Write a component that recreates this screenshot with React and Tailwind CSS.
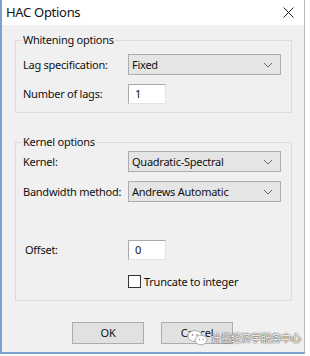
import React from 'react';

const Chevron = () => (
  <svg width="10" height="6" viewBox="0 0 10 6" className="shrink-0">
    <path d="M1 1 L5 5 L9 1" fill="none" stroke="#6b6b6b" strokeWidth="1" />
  </svg>
);

function Select({ value }) {
  return (
    <div className="flex h-[21px] w-[153px] items-center justify-between border border-[#adadad] bg-[#e5e5e5] pl-[3px] pr-[7px]">
      <span>{value}</span>
      <Chevron />
    </div>
  );
}

function NumberBox({ value }) {
  return (
    <div className="flex h-[20px] w-[38px] items-center border border-[#a9a9a9] border-b-[#e3e3e3] border-r-[#e3e3e3] bg-white pl-[6px]">
      {value}
    </div>
  );
}

function Row({ label, children, className = '' }) {
  return (
    <div className={`flex items-center ${className}`}>
      <span className="w-[105px] shrink-0 whitespace-nowrap">{label}</span>
      {children}
    </div>
  );
}

function Group({ title, className = '', children }) {
  return (
    <fieldset className={`mx-[13px] border border-[#dcdcdc] pl-[7px] pr-[10px] ${className}`}>
      <legend className="ml-[-1px] px-[1px] leading-[16px]">{title}</legend>
      {children}
    </fieldset>
  );
}

function Button({ children }) {
  return (
    <div className="flex h-[22px] w-[72px] items-center justify-center border border-[#adadad] bg-[#e1e1e1]">
      {children}
    </div>
  );
}

export default function App() {
  return (
    <div
      className="relative flex h-[356px] w-[310px] overflow-hidden bg-white text-[11px] leading-[16px] tracking-[-0.25px] text-[#111]"
      style={{ fontFamily: '"Noto Sans", "Noto Sans CJK SC", sans-serif' }}
    >
      {/* dialog window */}
      <div className="flex h-[354px] w-[305px] shrink-0 flex-col border-b-2 border-l-2 border-r border-[#7aa3cf] border-r-[#b8b8b8] bg-[#f0f0f0]">
        <div className="flex h-[25px] shrink-0 items-center justify-between bg-white pl-[4px] pr-[10px]">
          <span className="text-[13px] leading-none tracking-[-0.3px]">HAC Options</span>
          <svg width="11" height="11" viewBox="0 0 11 11">
            <path d="M0.5 0.5 L10.5 10.5 M10.5 0.5 L0.5 10.5" stroke="#222" strokeWidth="1" />
          </svg>
        </div>

        <Group title="Whitening options" className="mt-[7px] pb-[8px]">
          <Row label="Lag specification:" className="mt-[6px]">
            <Select value="Fixed" />
          </Row>
          <Row label="Number of lags:" className="mt-[9px]">
            <NumberBox value="1" />
          </Row>
        </Group>

        <Group title="Kernel options" className="mt-[21px] pb-[11px]">
          <Row label="Kernel:" className="mt-[1px]">
            <Select value="Quadratic-Spectral" />
          </Row>
          <Row label="Bandwidth method:" className="mt-[9px]">
            <Select value="Andrews Automatic" />
          </Row>
          <Row label={<span className="pl-[2px]">Offset:</span>} className="mt-[38px]">
            <NumberBox value="0" />
          </Row>
          <div className="mt-[14px] flex h-[15px] items-center pl-[105px]">
            <div className="h-[13px] w-[13px] border border-[#333] bg-white" />
            <span className="ml-[3px]">Truncate to integer</span>
          </div>
        </Group>

        <div className="mt-[21px] flex gap-[17px] pl-[70px]">
          <Button>OK</Button>
          <Button>Cancel</Button>
        </div>
      </div>

      {/* window behind */}
      <div className="flex-1 bg-white" />

      {/* watermark */}
      <div className="absolute left-[187px] top-[329px] flex items-center gap-[2px] whitespace-nowrap">
        <svg width="22" height="18" viewBox="0 0 22 18">
          <ellipse cx="8" cy="7" rx="7" ry="5.5" fill="#fff" stroke="#9a9a9a" strokeWidth="0.8" />
          <ellipse cx="14" cy="11" rx="6" ry="4.8" fill="#fff" stroke="#9a9a9a" strokeWidth="0.8" />
          <circle cx="5.5" cy="6" r="0.9" fill="#9a9a9a" />
          <circle cx="10" cy="6" r="0.9" fill="#9a9a9a" />
          <circle cx="12.5" cy="10.5" r="0.7" fill="#9a9a9a" />
          <circle cx="16" cy="10.5" r="0.7" fill="#9a9a9a" />
        </svg>
        <span
          className="text-[10px] leading-none tracking-normal text-white"
          style={{ textShadow: '0 0 2px #444, 0 0 1px #222' }}
        >
          计量经济学服务中心
        </span>
      </div>
    </div>
  );
}
